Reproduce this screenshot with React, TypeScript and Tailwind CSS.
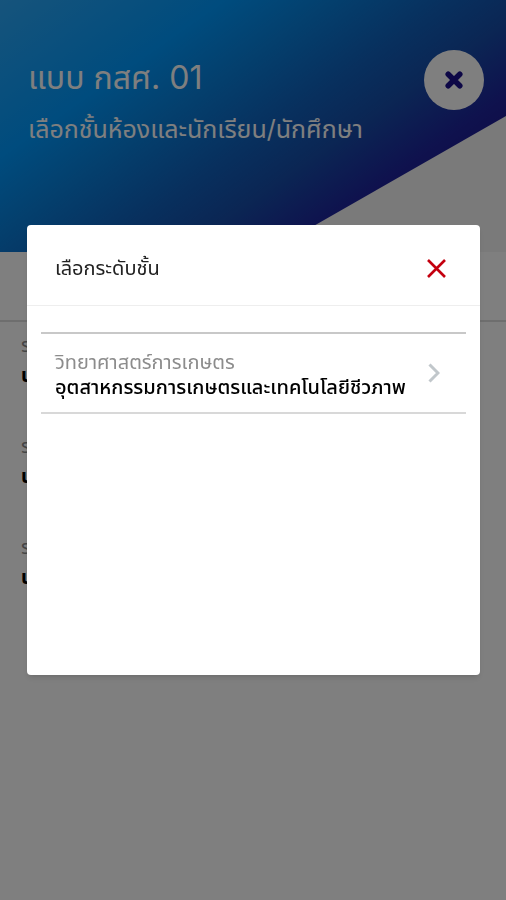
import React from 'react';

interface Student {
    id: number;
    label: string;
    name: string;
}

interface Level {
    id: number;
    faculty: string;
    branch: string;
}

const STUDENTS: Student[] = [
    { id: 1, label: 'รหัส', name: 'นาย' },
    { id: 2, label: 'รหัส', name: 'นาย' },
    { id: 3, label: 'รหัส', name: 'นาย' },
];

const LEVELS: Level[] = [
    { id: 1, faculty: 'วิทยาศาสตร์การเกษตร', branch: 'อุตสาหกรรมการเกษตรและเทคโนโลยีชีวภาพ' },
];

const Header: React.FC = () => (
    <header className="h-[252px] bg-[#f4f4f4]">
        <div className="h-full pt-[50px] pl-7 pr-[22px] flex justify-between items-start bg-[linear-gradient(145deg,#2ca8f8_0%,#0098fc_26%,#0880dc_38%,#1060bc_52%,#164ca8_62%,#1e249c_74%,#22148c_84%,#1c0480_100%)] [clip-path:polygon(0_0,100%_0,100%_46%,53%_100%,0_100%)]">
            <div className="text-white">
                <h1 className="text-[32px] leading-[56px]">แบบ กสศ. 01</h1>
                <p className="text-[25px] leading-[46px]">เลือกชั้นห้องและนักเรียน/นักศึกษา</p>
            </div>
            <button className="w-[60px] h-[60px] shrink-0 rounded-full bg-white text-[#1a0f8c] flex items-center justify-center" aria-label="ปิดหน้า">
                <svg width="18" height="18" viewBox="0 0 18 18" fill="none" stroke="currentColor" strokeWidth="5.5" strokeLinecap="round"><path d="M3.2 3.2 14.8 14.8M14.8 3.2 3.2 14.8" /></svg>
            </button>
        </div>
    </header>
);

const LevelDialog: React.FC = () => (
    <div className="fixed inset-0 bg-black/50 flex items-center justify-center pl-[27px] pr-[26px]">
        <div className="w-full h-1/2 bg-white rounded-[4px] shadow-md" role="dialog" aria-modal="true" aria-labelledby="level-title">
            <div className="h-[81px] pt-1.5 pl-7 pr-[34px] flex items-center justify-between border-b border-[#eeeeee]">
                <h2 id="level-title" className="text-xl text-[#222222]">เลือกระดับชั้น</h2>
                <button className="text-[#c4000f]" aria-label="ปิด">
                    <svg width="19" height="19" viewBox="0 0 19 19" fill="none" stroke="currentColor" strokeWidth="2.6"><path d="M1 1 18 18M18 1 1 18" /></svg>
                </button>
            </div>
            <ul className="mt-[26px] mx-[14px] border-t-2 border-[#c8c8c8]">
                {LEVELS.map(level => (
                    <li key={level.id} className="border-b-2 border-[#d8d8d8]">
                        <button className="w-full h-[78px] pl-[14px] pr-[26px] flex items-center justify-between text-left">
                            <span className="pt-1">
                                <span className="block text-xl leading-[25px] text-[#8c8c8c]">{level.faculty}</span>
                                <span className="block text-xl leading-[25px] text-black font-medium whitespace-nowrap">{level.branch}</span>
                            </span>
                            <svg width="12" height="20" viewBox="0 0 12 20" fill="none" stroke="#c1c7cb" strokeWidth="3"><path d="m1.5 1.5 8.5 8.5-8.5 8.5" /></svg>
                        </button>
                    </li>
                ))}
            </ul>
        </div>
    </div>
);

export default function App() {
    return (
        <div className="min-h-screen bg-white font-['Inter','Noto_Sans_Thai','Noto_Sans',sans-serif]">
            <Header />
            <div className="h-[70px] border-b-2 border-[#dddddd]"></div>
            <ul className="px-[21px]">
                {STUDENTS.map(student => (
                    <li key={student.id} className="h-[101px] pt-2">
                        <p className="text-xl leading-[30px] text-[#8c8c8c]">{student.label}</p>
                        <p className="text-xl leading-[30px] font-bold text-black">{student.name}</p>
                    </li>
                ))}
            </ul>
            <LevelDialog />
        </div>
    );
}
